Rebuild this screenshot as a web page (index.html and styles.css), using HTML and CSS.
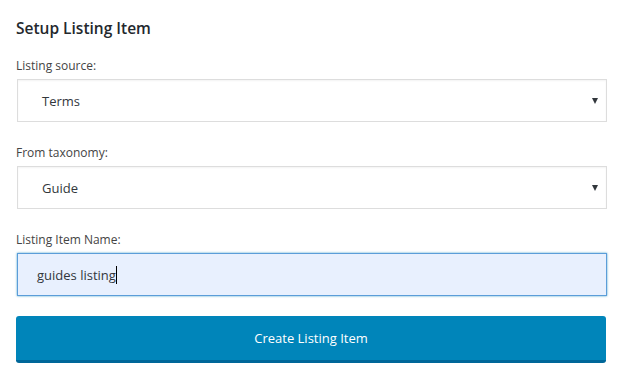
FILE: index.html
```html
<!DOCTYPE html>
<html>
<head>
    <title>Setup Listing Item</title>
    <link rel="stylesheet" href="styles.css">
</head>
<body>
    <div class="panel">
        <h2 class="panel-title">Setup Listing Item</h2>

        <div class="field">
            <label class="field-label">Listing source:</label>
            <div class="select">
                <span class="select-value">Terms</span>
                <span class="select-arrow"></span>
            </div>
        </div>

        <div class="field">
            <label class="field-label">From taxonomy:</label>
            <div class="select">
                <span class="select-value">Guide</span>
                <span class="select-arrow"></span>
            </div>
        </div>

        <div class="field">
            <label class="field-label">Listing Item Name:</label>
            <div class="text-input">
                <span class="input-value">guides listing</span><span class="caret"></span>
            </div>
        </div>

        <button class="btn-primary">Create Listing Item</button>
    </div>
</body>
</html>
```

FILE: styles.css
```css
body {
    margin: 0;
    background: #fff;
    font-family: "Open Sans", "Noto Sans", sans-serif;
    color: #23282d;
}
.panel {
    padding: 14px 17px 0 16px;
    width: 591px;
}
.panel-title {
    margin: 0 0 16px;
    font-size: 15.5px;
    font-weight: 600;
    line-height: 28px;
    color: #23282d;
}
.field {
    margin-bottom: 23px;
}
.field:nth-of-type(3) {
    margin-bottom: 22px;
}
.field-label {
    display: block;
    font-size: 12px;
    line-height: 16px;
    color: #444;
    margin-bottom: 5px;
}
.select {
    display: flex;
    align-items: center;
    justify-content: space-between;
    height: 41px;
    margin-left: 1px;
    padding: 0 8px 0 24px;
    border: 1px solid #ddd;
    background: #fff;
    box-shadow: inset 0 1px 2px rgba(0, 0, 0, 0.05);
    font-size: 13px;
    color: #32373c;
}
.select-arrow {
    width: 0;
    height: 0;
    border-left: 3px solid transparent;
    border-right: 3px solid transparent;
    border-top: 6px solid #32373c;
}
.text-input {
    display: flex;
    align-items: center;
    height: 41px;
    margin-left: 1px;
    padding: 0 19px;
    border: 1px solid #5b9dd9;
    background: #e8f0fe;
    box-shadow: 0 0 2px rgba(30, 140, 190, 0.8);
    font-size: 13px;
    color: #32373c;
}
.caret {
    display: inline-block;
    width: 1px;
    height: 18px;
    background: #000;
}
.btn-primary {
    display: block;
    width: 590px;
    height: 47px;
    margin-top: -2px;
    border: none;
    border-bottom: 3px solid #006799;
    border-radius: 3px;
    background: #0085ba;
    color: #fff;
    font-family: "Open Sans", "Noto Sans", sans-serif;
    font-size: 13px;
    cursor: pointer;
}
```
